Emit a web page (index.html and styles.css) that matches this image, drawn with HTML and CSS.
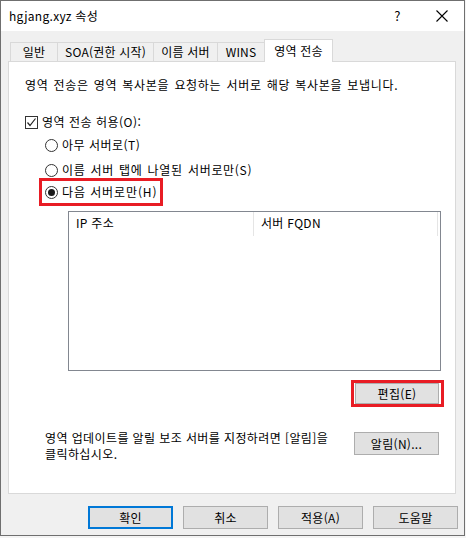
FILE: index.html
```html
<!DOCTYPE html>
<html lang="ko">
<head>
<meta charset="utf-8">
<link rel="stylesheet" href="styles.css">
</head>
<body>
<div class="window">
  <div class="titlebar">
    <span class="title">hgjang.xyz 속성</span>
    <span class="help">?</span>
    <svg class="close" width="12" height="12" viewBox="0 0 12 12"><path d="M0.5 0.5L11.5 11.5M11.5 0.5L0.5 11.5" stroke="#000" stroke-width="1.1" fill="none"/></svg>
  </div>
  <div class="tabs">
    <div class="tab t1">일반</div>
    <div class="tab t2">SOA(권한 시작)</div>
    <div class="tab t3">이름 서버</div>
    <div class="tab t4">WINS</div>
    <div class="tab t5 active">영역 전송</div>
  </div>
  <div class="panel">
    <p class="desc">영역 전송은 영역 복사본을 요청하는 서버로 해당 복사본을 보냅니다.</p>
    <div class="check-row">
      <span class="checkbox"><svg width="11" height="11" viewBox="0 0 11 11"><path d="M1.5 5.5L4 8.5L9.5 1.5" stroke="#222" stroke-width="1.2" fill="none"/></svg></span>
      <span>영역 전송 허용(O):</span>
    </div>
    <div class="radios">
      <div class="radio-row r1"><span class="radio"></span><span>아무 서버로(T)</span></div>
      <div class="radio-row r2"><span class="radio"></span><span>이름 서버 탭에 나열된 서버로만(S)</span></div>
      <div class="highlight hl-radio">
        <div class="radio-row r3"><span class="radio on"></span><span>다음 서버로만(H)</span></div>
      </div>
    </div>
    <div class="list">
      <div class="list-head">
        <div class="col c1">IP 주소</div>
        <div class="col c2">서버 FQDN</div>
      </div>
    </div>
    <div class="edit-row">
      <div class="highlight hl-btn"><button class="btn edit">편집(E)</button></div>
    </div>
    <div class="notify-row">
      <p class="notify-text">영역 업데이트를 알릴 보조 서버를 지정하려면 [알림]을<br>클릭하십시오.</p>
      <button class="btn notify">알림(N)...</button>
    </div>
  </div>
  <div class="footer">
    <button class="btn default">확인</button>
    <button class="btn">취소</button>
    <button class="btn">적용(A)</button>
    <button class="btn">도움말</button>
  </div>
</div>
</body>
</html>
```
FILE: styles.css
```css
* { box-sizing: border-box; }
html, body { margin: 0; padding: 0; }
body {
  background: #f4f4f4;
  font-family: "Noto Sans CJK KR", "Noto Sans", sans-serif;
  font-size: 12px;
  letter-spacing: 0.5px;
  color: #000;
  width: 466px;
  height: 538px;
  overflow: hidden;
}
.window {
  width: 465px;
  height: 536px;
  border: 1px solid #6f6f6f;
  background: #f0f0f0;
  display: flex;
  flex-direction: column;
}
.titlebar {
  height: 30px;
  background: #fff;
  display: flex;
  align-items: center;
  padding-left: 8px;
  flex: none;
}
.title { font-size: 12px; line-height: 16px; letter-spacing: 0.3px; }
.help { margin-left: auto; font-size: 13px; margin-right: 35px; line-height: 16px; }
.close { margin-right: 16px; }
.tabs {
  display: flex;
  align-items: flex-end;
  height: 22px;
  margin-top: 8px;
  padding-left: 9px;
  flex: none;
  position: relative;
  z-index: 1;
  letter-spacing: 0.2px;
}
.tab {
  height: 19px;
  border: 1px solid #d9d9d9;
  border-bottom: none;
  margin-left: -1px;
  background: #f0f0f0;
  display: flex;
  align-items: center;
  justify-content: center;
  line-height: 16px;
  white-space: nowrap;
}
.tab:first-child { margin-left: 0; }
.t1 { width: 48px; }
.t2 { width: 97px; }
.t3 { width: 65px; }
.t4 { width: 48px; }
.t5 { width: 69px; }
.tab.active {
  height: 23px;
  background: #fff;
  margin-bottom: -1px;
  padding-bottom: 1px;
}
.panel {
  margin-left: 7px;
  width: 448px;
  height: 433px;
  border: 1px solid #d9d9d9;
  background: #fff;
  flex: none;
  padding: 15px 0 0 16px;
  display: flex;
  flex-direction: column;
}
.desc { margin: 0; line-height: 16px; letter-spacing: 0.7px; word-spacing: 1px; white-space: nowrap; }
.check-row {
  display: flex;
  align-items: center;
  margin-top: 21px;
  height: 16px;
  line-height: 16px;
}
.checkbox {
  width: 13px;
  height: 13px;
  border: 1px solid #333;
  margin-right: 4px;
  display: flex;
  align-items: center;
  justify-content: center;
}
.radios {
  display: flex;
  flex-direction: column;
  padding-left: 20px;
}
.radio-row {
  display: flex;
  align-items: center;
  height: 16px;
  line-height: 16px;
  white-space: nowrap;
}
.r1 { margin-top: 7px; }
.r2 { margin-top: 9px; letter-spacing: 0.7px; word-spacing: 1px; }
.r3 { letter-spacing: 0.9px; }
.radio {
  width: 13px;
  height: 13px;
  border: 1px solid #333;
  border-radius: 50%;
  margin-right: 4px;
  display: flex;
  align-items: center;
  justify-content: center;
  flex: none;
}
.radio.on::after {
  content: "";
  width: 7px;
  height: 7px;
  border-radius: 50%;
  background: #1a1a1a;
}
.highlight { border: 3px solid #e81c24; }
.hl-radio {
  align-self: flex-start;
  margin-left: -6px;
  margin-top: 0;
  width: 124px;
  height: 28px;
  padding: 3px 0 0 3px;
}
.list {
  margin-left: 43px;
  margin-top: 5px;
  width: 373px;
  height: 160px;
  border: 1px solid #828790;
  flex: none;
}
.list-head { display: flex; height: 24px; letter-spacing: 0.3px; }
.col {
  line-height: 22px;
  padding-left: 7px;
  border-right: 1px solid #e5e5e5;
}
.c1 { width: 185px; }
.c2 { width: 184px; }
.edit-row {
  display: flex;
  justify-content: flex-end;
  margin-top: 9px;
  padding-right: 11px;
}
.hl-btn {
  width: 93px;
  height: 27px;
  padding: 0 2px 0 1px;
  display: flex;
  align-items: center;
}
.btn {
  font-family: inherit;
  font-size: 12px;
  letter-spacing: 0.3px;
  color: #000;
  background: #e1e1e1;
  border: 1px solid #adadad;
  border-radius: 0;
  margin: 0;
  padding: 0;
  line-height: 16px;
  height: 23px;
  width: 85px;
}
.edit { width: 84px; height: 21px; }
.notify-row {
  display: flex;
  align-items: flex-start;
  margin-top: 23px;
}
.notify-text {
  margin: 0 0 0 20px;
  line-height: 16px;
  width: 302px;
  letter-spacing: 0.4px;
  white-space: nowrap;
}
.notify { margin-left: 7px; margin-top: 2px; }
.footer {
  display: flex;
  gap: 10px;
  justify-content: flex-end;
  margin-top: 12px;
  padding-right: 6px;
}
.btn.default { border: 2px solid #0078d7; }
```
